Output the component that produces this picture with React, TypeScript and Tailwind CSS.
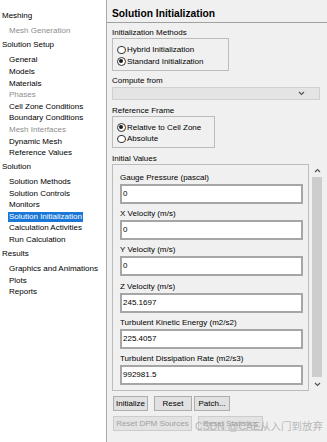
type Item = { label: string; disabled?: boolean; selected?: boolean };

const tree: { title: string; items: Item[] }[] = [
  { title: "Meshing", items: [{ label: "Mesh Generation", disabled: true }] },
  {
    title: "Solution Setup",
    items: [
      { label: "General" },
      { label: "Models" },
      { label: "Materials" },
      { label: "Phases", disabled: true },
      { label: "Cell Zone Conditions" },
      { label: "Boundary Conditions" },
      { label: "Mesh Interfaces", disabled: true },
      { label: "Dynamic Mesh" },
      { label: "Reference Values" },
    ],
  },
  {
    title: "Solution",
    items: [
      { label: "Solution Methods" },
      { label: "Solution Controls" },
      { label: "Monitors" },
      { label: "Solution Initialization", selected: true },
      { label: "Calculation Activities" },
      { label: "Run Calculation" },
    ],
  },
  {
    title: "Results",
    items: [{ label: "Graphics and Animations" }, { label: "Plots" }, { label: "Reports" }],
  },
];

const fields = [
  { label: "Gauge Pressure (pascal)", value: "0" },
  { label: "X Velocity (m/s)", value: "0" },
  { label: "Y Velocity (m/s)", value: "0" },
  { label: "Z Velocity (m/s)", value: "245.1697" },
  { label: "Turbulent Kinetic Energy (m2/s2)", value: "225.4057" },
  { label: "Turbulent Dissipation Rate (m2/s3)", value: "992981.5" },
];

function Radio({ checked, label }: { checked?: boolean; label: string }) {
  return (
    <div className="flex h-[11.5px] items-center">
      <span className="ml-[4px] flex h-[8.5px] w-[8.5px] items-center justify-center rounded-full border border-[#333] bg-white">
        {checked && <span className="h-[4px] w-[4px] rounded-full bg-[#1a1a1a]" />}
      </span>
      <span className="ml-[1.5px] leading-[11.5px]">{label}</span>
    </div>
  );
}

function Chevron({ up }: { up?: boolean }) {
  return (
    <svg width="7" height="5" viewBox="0 0 7 5">
      <path
        d={up ? "M1 4 L3.5 1.5 L6 4" : "M1 1 L3.5 3.5 L6 1"}
        fill="none"
        stroke="#555"
        strokeWidth="1.2"
      />
    </svg>
  );
}

export default function App() {
  return (
    <div className="flex h-[442px] w-[327px] overflow-hidden font-['Liberation_Sans',Arial,sans-serif] text-[8px] text-black">
      {/* navigation tree */}
      <div className="w-[107px] shrink-0 border-r border-[#a9a9a9] bg-white pt-[8px]">
        {tree.map((group) => (
          <div key={group.title}>
            <div className="mb-[3.4px] mt-[2.4px] pl-[2px] leading-[11.6px]">{group.title}</div>
            {group.items.map((it) => (
              <div key={it.label} className="pl-[8px] leading-[11.6px]">
                <span
                  className={
                    it.selected
                      ? "inline-block bg-[#1b78d8] px-[1px] leading-[10px] text-white"
                      : it.disabled
                        ? "px-[1px] text-[#8e8e8e]"
                        : "px-[1px]"
                  }
                >
                  {it.label}
                </span>
              </div>
            ))}
          </div>
        ))}
      </div>

      {/* task page */}
      <div className="relative flex-1 bg-[#f0f0f0]">
        <div className="h-[23px] border-b border-[#a0a0a0] pl-[5px] pt-[8px] text-[10.25px] font-bold leading-[12px]">
          Solution Initialization
        </div>

        <div className="pl-[5px]">
          <div className="mt-[5px] leading-[10px]">Initialization Methods</div>
          <div className="h-[33px] w-[117px] border border-[#bcbcbc] pt-[5px]">
            <Radio label="Hybrid  Initialization" />
            <Radio checked label="Standard Initialization" />
          </div>

          <div className="mt-[5px] leading-[10px]">Compute from</div>
          <div className="mt-[1px] flex h-[13px] w-[208px] items-center justify-end border border-[#d0d0d0] bg-[#e4e4e4] pr-[14px]">
            <Chevron />
          </div>

          <div className="mt-[6px] leading-[10px]">Reference Frame</div>
          <div className="h-[32px] w-[103px] border border-[#bcbcbc] pt-[4.5px]">
            <Radio checked label="Relative to Cell Zone" />
            <Radio label="Absolute" />
          </div>

          <div className="mt-[6px] leading-[10px]">Initial Values</div>
          <div className="flex">
            <div className="flex h-[227px] w-[197px] flex-col gap-[5.2px] border border-[#bcbcbc] pl-[7px] pt-[8px]">
              {fields.map((f) => (
                <div key={f.label}>
                  <div className="leading-[10px]">{f.label}</div>
                  <div className="mt-[1px] flex h-[20px] w-[183px] items-center border-2 border-[#a6a6a6] bg-white pl-[1px]">
                    {f.value}
                  </div>
                </div>
              ))}
            </div>
            <div className="ml-[1px] flex w-[13px] flex-col">
              <div className="flex h-[13px] items-center justify-center pl-[2px]">
                <Chevron up />
              </div>
              <div className="ml-[2px] h-[200px] w-[10px] bg-[#cdcdcd]" />
              <div className="flex h-[14px] items-center justify-center pl-[2px]">
                <Chevron />
              </div>
            </div>
          </div>

          <div className="mt-[5px] flex h-[15px] pl-[1px]">
            <div className="flex w-[35px] items-center justify-center border border-[#adadad] bg-[#e1e1e1]">Initialize</div>
            <div className="ml-[6px] flex w-[38px] items-center justify-center border border-[#adadad] bg-[#e1e1e1]">Reset</div>
            <div className="ml-[2px] flex w-[36px] items-center justify-center border border-[#adadad] bg-[#e1e1e1]">Patch...</div>
          </div>
          <div className="mt-[5px] flex h-[15px] pl-[1px] text-[#a0a0a0]">
            <div className="flex w-[79px] items-center justify-center border border-[#cccccc] bg-[#e3e3e3]">Reset DPM Sources</div>
            <div className="ml-[6px] flex w-[65px] items-center justify-center border border-[#cccccc] bg-[#e3e3e3]">Reset Statistics</div>
          </div>
        </div>

        <div className="absolute bottom-[10px] right-[4px] font-['Liberation_Sans','Noto_Sans_CJK_SC',sans-serif] text-[10.5px] leading-[12px] text-[#a8a8a8]/80">
          CSDN @CAE从入门到放弃
        </div>
      </div>
    </div>
  );
}
